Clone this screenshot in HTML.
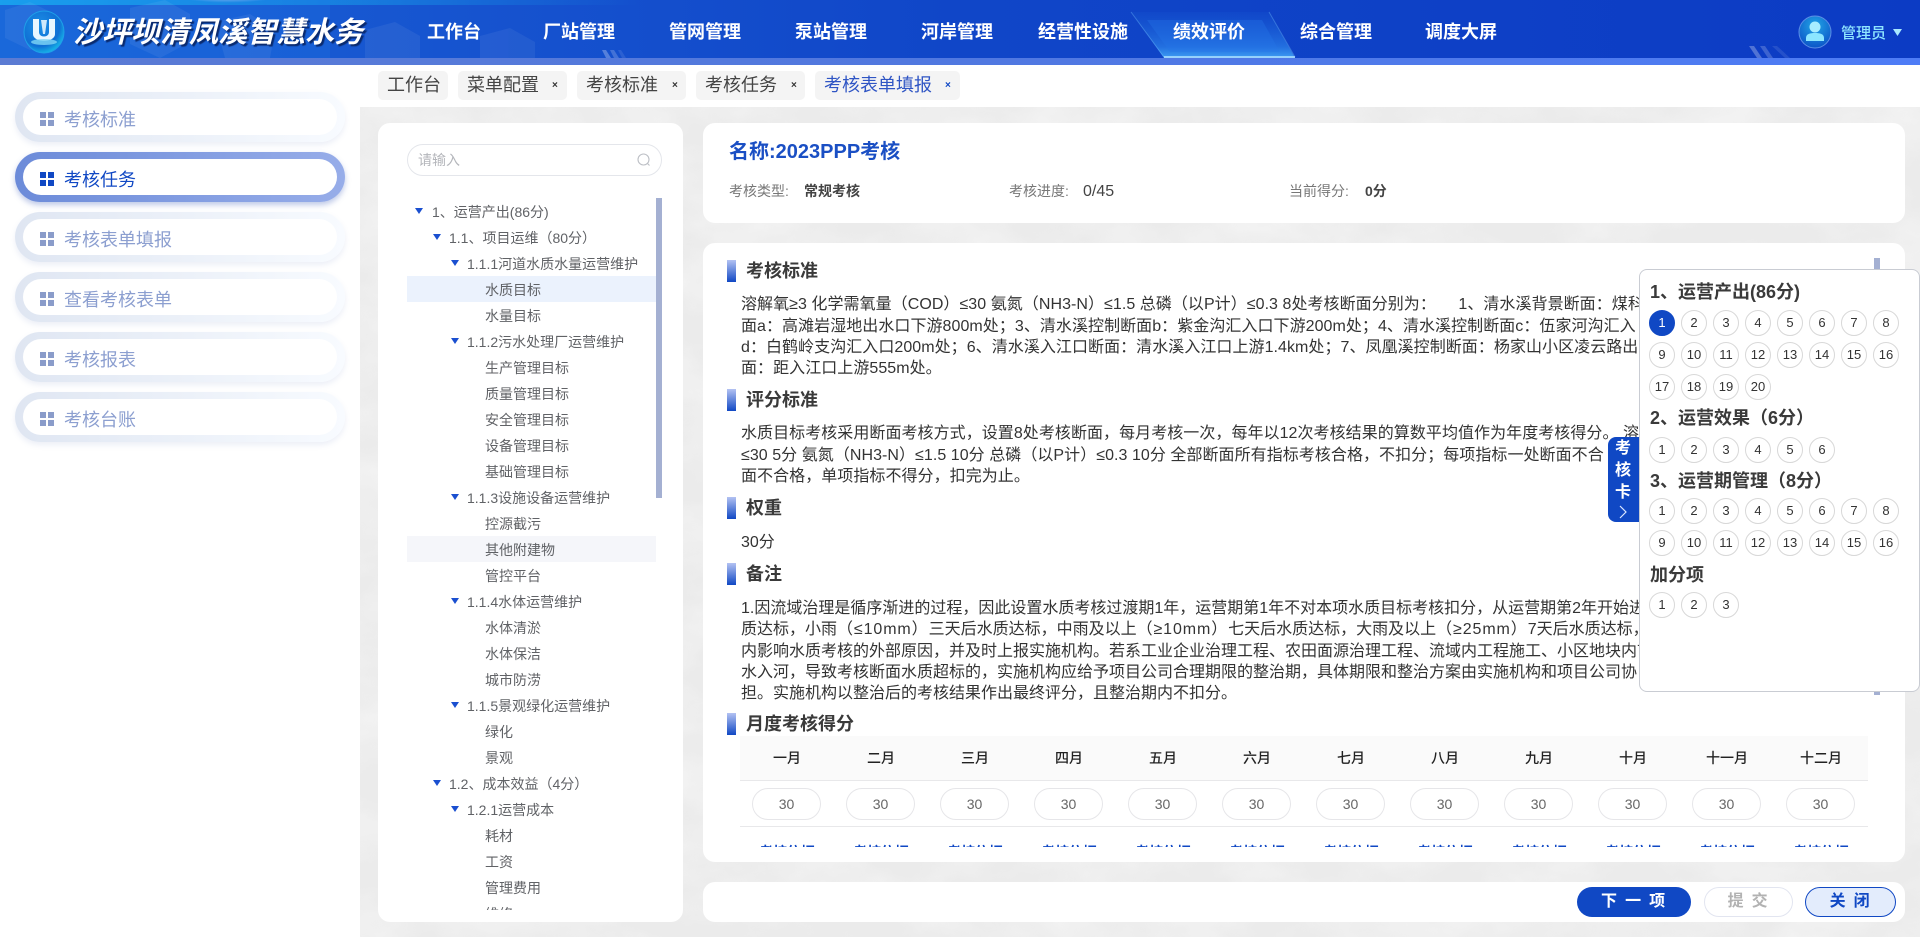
<!DOCTYPE html>
<html lang="zh-CN">
<head>
<meta charset="utf-8">
<title>沙坪坝清凤溪智慧水务</title>
<style>
*{box-sizing:border-box;margin:0;padding:0}
html,body{width:1920px;height:937px;overflow:hidden;background:#fff}
body{position:relative;font-family:"Liberation Sans","Noto Sans CJK SC",sans-serif;color:#333}
.a,.t{position:absolute}
.t{white-space:nowrap}
.hd{left:0;top:0;width:1920px;height:58px;background:linear-gradient(90deg,#1a63d6 0,#1653cf 25%,#1046c8 50%,#0c3bc4 100%);overflow:hidden}
.strip{left:0;top:58px;width:1920px;height:7px;background:linear-gradient(90deg,#5b7bd3,#5078e0 50%,#4e7cf6)}
.nav{top:19px;height:26px;line-height:26px;font-size:18px;font-weight:700;color:#fff}
.logo{left:73px;top:9px;height:48px;line-height:48px;font-size:29px;font-weight:700;font-style:italic;color:#fff;text-shadow:2px 2px 1px #0a2a6e}
.tab{top:71px;height:29px;background:#f4f4f4;border-radius:5px;line-height:29px;font-size:18px;color:#444;padding-left:9px}
.tab i{position:absolute;top:0;font-style:normal;font-size:10px;font-weight:700;color:#333}
.bg{left:360px;top:107px;width:1560px;height:830px;background:#eeeeee;overflow:hidden}
.side{left:15px;width:330px;height:50px;border-radius:25px;background:linear-gradient(90deg,#dfe6f2,#f8fbff);box-shadow:0 3px 6px rgba(120,140,200,.14)}
.side b{position:absolute;left:8px;top:7px;width:314px;height:36px;background:#fff;border-radius:18px}
.side u{position:absolute;left:25px;top:20px;width:6px;height:6px;background:#8a9cca;box-shadow:8px 0 #8a9cca,0 8px #8a9cca,8px 8px #8a9cca}
.side span{position:absolute;left:49px;top:14px;line-height:28px;font-size:18px;color:#8c9fd0;white-space:nowrap}
.side.on{background:linear-gradient(90deg,#6c8bd9,#97ade9);box-shadow:0 3px 6px rgba(70,100,190,.35)}
.side.on u{background:#1048c4;box-shadow:8px 0 #1048c4,0 8px #1048c4,8px 8px #1048c4}
.side.on span{color:#1048c4}
.card{background:#fff;border-radius:12px}
.tree{left:407px;top:198px;width:249px;height:712px;overflow:hidden}
.r{position:relative;height:26px;line-height:28px;font-size:14px;color:#606266;white-space:nowrap}
.r s{position:absolute;top:10px;width:0;height:0;border-left:4.5px solid transparent;border-right:4.5px solid transparent;border-top:6px solid #1a4fd0;text-decoration:none}
.l1{padding-left:25px}.l1 s{left:8px}
.l2{padding-left:42px}.l2 s{left:26px}
.l3{padding-left:60px}.l3 s{left:44px}
.l4{padding-left:78px}
.h{left:727px;width:9px;height:22px;background:linear-gradient(180deg,#b3c2f2,#1048c4)}
.ht{left:746px;height:26px;line-height:26px;font-size:18px;font-weight:700;color:#3a3a3a}
.p{left:741px;height:21px;line-height:21px;font-size:16px;color:#333}
.q{letter-spacing:.05px}
.w{letter-spacing:.9px}
.m{top:181px;height:20px;line-height:20px;font-size:14px;color:#777}
.mv{top:181px;height:20px;line-height:20px;font-size:14px;color:#444;font-weight:700}
.th{top:736px;width:94px;height:45px;line-height:45px;text-align:center;font-size:14px;font-weight:500;color:#222}
.ip{top:788px;width:69px;height:32px;line-height:30px;border:1px solid #e6e6e9;border-radius:16px;text-align:center;font-size:14px;color:#666;background:#fff}
.lk{top:15px;width:94px;height:20px;line-height:20px;text-align:center;font-size:14px;font-weight:700;color:#1048c4}
.pop{left:1639px;top:269px;width:281px;height:423px;background:#fff;border:1px solid #c9ccd3;border-radius:8px}
.pt{left:1650px;height:26px;line-height:26px;font-size:18px;font-weight:700;color:#3a3a3a}
.c{width:26px;height:26px;line-height:24px;border:1px solid #d8d8d8;border-radius:50%;text-align:center;font-size:13px;color:#333;background:#fff}
.btn{top:887px;height:30px;line-height:30px;border-radius:15px;text-align:center;font-size:16px;font-weight:700;white-space:nowrap;letter-spacing:1.8px}
</style>
</head>
<body>

<div class="a hd">
<svg class="a" style="left:0;top:0" width="1920" height="58" viewBox="0 0 1920 58">
<defs>
<linearGradient id="ag" x1="0" y1="0" x2="0" y2="1"><stop offset="0" stop-color="#1f6fe0" stop-opacity=".1"/><stop offset=".75" stop-color="#2f8cf0" stop-opacity=".6"/><stop offset="1" stop-color="#45a8f8" stop-opacity=".9"/></linearGradient>
<linearGradient id="tg" x1="0" y1="0" x2="1" y2="0"><stop offset="0" stop-color="#18b4f2" stop-opacity=".9"/><stop offset="1" stop-color="#18b4f2" stop-opacity="0"/></linearGradient>
<radialGradient id="gl" cx=".5" cy="0" r=".7"><stop offset="0" stop-color="#d9cff5"/><stop offset="1" stop-color="#d9cff5" stop-opacity="0"/></radialGradient>
</defs>
<rect x="0" y="0" width="640" height="5" fill="url(#tg)"/>
<rect x="0" y="0" width="330" height="58" fill="#1d78e6" opacity=".25"/>
<ellipse cx="228" cy="0" rx="40" ry="7" fill="url(#gl)"/>
<g fill="#fff" opacity=".06">
<polygon points="5,10 30,2 55,14 55,40 30,50 5,38"/>
<polygon points="130,8 165,0 190,14 190,42 160,58 130,44"/>
<polygon points="215,22 250,14 275,30 270,58 225,58"/>
<polygon points="365,30 395,22 420,36 420,58 365,58"/>
<polygon points="480,36 510,28 535,42 535,58 480,58"/>
</g>
<polygon points="1131,12 1269,12 1295,58 1164,58" fill="url(#ag)"/>
<polygon points="1147,20 1262,20 1280,52 1170,52" fill="#2576e8" opacity=".35"/>
<path d="M1131 12 L1164 57" stroke="#7cc8ff" stroke-width="1" fill="none" opacity=".35"/>
<path d="M1269 12 L1295 57" stroke="#7cc8ff" stroke-width="1" fill="none" opacity=".35"/>
<rect x="1164" y="56" width="131" height="2" fill="#b5e4ff" opacity=".75"/>
<g fill="#fff">
<polygon points="602,50 606,50 611,58 606,58" opacity=".28"/>
<polygon points="610,50 614,50 619,58 614,58" opacity=".2"/>
<polygon points="618,50 621,50 626,58 622,58" opacity=".1"/>
<polygon points="1749,46 1754,46 1762,58 1757,58" opacity=".28"/>
<polygon points="1760,46 1765,46 1773,58 1768,58" opacity=".2"/>
<polygon points="1772,46 1777,46 1790,58 1785,58" opacity=".1"/>
</g>
<defs><radialGradient id="lg" cx=".4" cy=".35" r=".7"><stop offset="0" stop-color="#1c8fe6"/><stop offset=".7" stop-color="#0f6fd4"/><stop offset="1" stop-color="#17c0ea"/></radialGradient></defs>
<ellipse cx="44" cy="32" rx="20" ry="21" fill="url(#lg)" stroke="#1f9fe8" stroke-width="1"/>
<path d="M33 19 V34 C33 43 55 43 55 34 V19 H49 V32 C49 38 39 38 39 32 V19 Z" fill="#e8f6ff"/>
<path d="M41 20 L43 34 H45 L47 20" fill="#cfe9fb"/>
<ellipse cx="44" cy="42" rx="13" ry="3" fill="#7fd6f5" opacity=".8"/>
<defs><radialGradient id="av" cx=".5" cy=".3" r=".7"><stop offset="0" stop-color="#22a6e6"/><stop offset="1" stop-color="#0c55c8"/></radialGradient></defs>
<ellipse cx="1815" cy="32" rx="16" ry="16" fill="url(#av)" stroke="#5c8fe6" stroke-width="1"/>
<circle cx="1815" cy="27" r="5.5" fill="#a8edff"/>
<path d="M1806 41 V38 C1806 34 1810 33 1815 33 C1820 33 1824 34 1824 38 V41 Z" fill="#8ce6ff"/>
<polygon points="1893,29 1902,29 1897.5,36" fill="#a9e8ff"/>
</svg>
<div class="t logo">沙坪坝清凤溪智慧水务</div>
<div class="t nav" style="left:427px">工作台</div>
<div class="t nav" style="left:543px">厂站管理</div>
<div class="t nav" style="left:669px">管网管理</div>
<div class="t nav" style="left:795px">泵站管理</div>
<div class="t nav" style="left:921px">河岸管理</div>
<div class="t nav" style="left:1038px">经营性设施</div>
<div class="t nav" style="left:1173px">绩效评价</div>
<div class="t nav" style="left:1300px">综合管理</div>
<div class="t nav" style="left:1425px">调度大屏</div>
<div class="t" style="left:1841px;top:22px;line-height:24px;font-size:15px;font-weight:500;color:#8fe6ff">管理员</div>
</div>
<div class="a strip"></div>

<div class="a tab" style="left:378px;width:70px">工作台</div>
<div class="a tab" style="left:458px;width:109px">菜单配置<i style="left:94px">×</i></div>
<div class="a tab" style="left:577px;width:109px">考核标准<i style="left:95px">×</i></div>
<div class="a tab" style="left:696px;width:109px">考核任务<i style="left:95px">×</i></div>
<div class="a tab" style="left:815px;width:145px;color:#2f55c4">考核表单填报<i style="left:130px;color:#1048c4">×</i></div>

<div class="a side" style="top:92px"><b></b><u></u><span>考核标准</span></div>
<div class="a side on" style="top:152px"><b></b><u></u><span>考核任务</span></div>
<div class="a side" style="top:212px"><b></b><u></u><span>考核表单填报</span></div>
<div class="a side" style="top:272px"><b></b><u></u><span>查看考核表单</span></div>
<div class="a side" style="top:332px"><b></b><u></u><span>考核报表</span></div>
<div class="a side" style="top:392px"><b></b><u></u><span>考核台账</span></div>

<div class="a bg">
<svg width="1560" height="830" style="position:absolute;left:0;top:0">
<filter id="n" x="0" y="0" width="100%" height="100%"><feTurbulence type="fractalNoise" baseFrequency=".012 .02" numOctaves="4" seed="7"/><feColorMatrix values="0 0 0 0 1  0 0 0 0 1  0 0 0 0 1  1.3 0 0 0 -.45"/></filter>
<rect width="1560" height="830" fill="#ebebeb"/>
<rect width="1560" height="830" filter="url(#n)" opacity=".6"/>
</svg>
</div>

<div class="a card" style="left:378px;top:123px;width:305px;height:799px"></div>
<div class="a" style="left:407px;top:144px;width:255px;height:32px;border:1px solid #e4e6eb;border-radius:16px;background:#fff"></div>
<div class="t" style="left:418px;top:150px;line-height:20px;font-size:14px;color:#b4b6bb">请输入</div>
<svg class="a" style="left:636px;top:152px" width="16" height="16" viewBox="0 0 16 16"><circle cx="7.5" cy="7.5" r="5.5" fill="none" stroke="#bcbfc5" stroke-width="1.1"/><path d="M11.5 11.5 L13.5 13.5" stroke="#bcbfc5" stroke-width="1.1"/></svg>
<div class="a" style="left:407px;top:276px;width:249px;height:26px;background:#ebf2fd"></div>
<div class="a" style="left:407px;top:536px;width:249px;height:26px;background:#f5f6fa"></div>
<div class="a" style="left:656px;top:198px;width:6px;height:300px;background:#a4b0d2"></div>
<div class="a tree">
<div class="r l1"><s></s>1、运营产出(86分)</div>
<div class="r l2"><s></s>1.1、项目运维&#65288;80分&#65289;</div>
<div class="r l3"><s></s>1.1.1河道水质水量运营维护</div>
<div class="r l4">水质目标</div>
<div class="r l4">水量目标</div>
<div class="r l3"><s></s>1.1.2污水处理厂运营维护</div>
<div class="r l4">生产管理目标</div>
<div class="r l4">质量管理目标</div>
<div class="r l4">安全管理目标</div>
<div class="r l4">设备管理目标</div>
<div class="r l4">基础管理目标</div>
<div class="r l3"><s></s>1.1.3设施设备运营维护</div>
<div class="r l4">控源截污</div>
<div class="r l4">其他附建物</div>
<div class="r l4">管控平台</div>
<div class="r l3"><s></s>1.1.4水体运营维护</div>
<div class="r l4">水体清淤</div>
<div class="r l4">水体保洁</div>
<div class="r l4">城市防涝</div>
<div class="r l3"><s></s>1.1.5景观绿化运营维护</div>
<div class="r l4">绿化</div>
<div class="r l4">景观</div>
<div class="r l2"><s></s>1.2、成本效益&#65288;4分&#65289;</div>
<div class="r l3"><s></s>1.2.1运营成本</div>
<div class="r l4">耗材</div>
<div class="r l4">工资</div>
<div class="r l4">管理费用</div>
<div class="r l4">维修</div>
</div>

<div class="a card" style="left:703px;top:123px;width:1202px;height:100px"></div>
<div class="t" style="left:729px;top:138px;line-height:28px;font-size:20px;font-weight:700;color:#1a4fc4">名称:2023PPP考核</div>
<div class="t m" style="left:729px">考核类型:</div><div class="t mv" style="left:804px">常规考核</div>
<div class="t m" style="left:1009px">考核进度:</div><div class="t mv" style="left:1083px;top:182px;font-size:16px;font-weight:400">0/45</div>
<div class="t m" style="left:1289px">当前得分:</div><div class="t mv" style="left:1365px">0分</div>

<div class="a card" style="left:703px;top:243px;width:1202px;height:619px"></div>

<div class="a h" style="top:260px"></div><div class="t ht" style="top:258px">考核标准</div>
<div class="t p q" style="top:294px">溶解氧≥3 化学需氧量&#65288;COD&#65289;≤30 氨氮&#65288;NH3-N&#65289;≤1.5 总磷&#65288;以P计&#65289;≤0.3 8处考核断面分别为&#65306;&nbsp;&nbsp;&nbsp;&nbsp; 1、清水溪背景断面&#65306;煤科</div>
<div class="t p q" style="top:316px">面a&#65306;高滩岩湿地出水口下游800m处&#65307;3、清水溪控制断面b&#65306;紫金沟汇入口下游200m处&#65307;4、清水溪控制断面c&#65306;伍家河沟汇入</div>
<div class="t p q" style="top:337px">d&#65306;白鹤岭支沟汇入口200m处&#65307;6、清水溪入江口断面&#65306;清水溪入江口上游1.4km处&#65307;7、凤凰溪控制断面&#65306;杨家山小区凌云路出</div>
<div class="t p q" style="top:358px">面&#65306;距入江口上游555m处。</div>

<div class="a h" style="top:389px"></div><div class="t ht" style="top:387px">评分标准</div>
<div class="t p q" style="top:423px">水质目标考核采用断面考核方式&#65292;设置8处考核断面&#65292;每月考核一次&#65292;每年以12次考核结果的算数平均值作为年度考核得分。 溶</div>
<div class="t p q" style="top:445px">≤30 5分 氨氮&#65288;NH3-N&#65289;≤1.5 10分 总磷&#65288;以P计&#65289;≤0.3 10分 全部断面所有指标考核合格&#65292;不扣分&#65307;每项指标一处断面不合</div>
<div class="t p q" style="top:466px">面不合格&#65292;单项指标不得分&#65292;扣完为止。</div>

<div class="a h" style="top:497px"></div><div class="t ht" style="top:495px">权重</div>
<div class="t p" style="top:532px">30分</div>

<div class="a h" style="top:563px"></div><div class="t ht" style="top:561px">备注</div>
<div class="t p" style="top:598px">1.因流域治理是循序渐进的过程&#65292;因此设置水质考核过渡期1年&#65292;运营期第1年不对本项水质目标考核扣分&#65292;从运营期第2年开始进</div>
<div class="t p" style="top:619px">质达标&#65292;小雨<span class="w">&#65288;≤10mm&#65289;</span>三天后水质达标&#65292;中雨及以上<span class="w">&#65288;≥10mm&#65289;</span>七天后水质达标&#65292;大雨及以上<span class="w">&#65288;≥25mm&#65289;</span>7天后水质达标&#65292;</div>
<div class="t p" style="top:641px">内影响水质考核的外部原因&#65292;并及时上报实施机构。若系工业企业治理工程、农田面源治理工程、流域内工程施工、小区地块内市</div>
<div class="t p" style="top:662px">水入河&#65292;导致考核断面水质超标的&#65292;实施机构应给予项目公司合理期限的整治期&#65292;具体期限和整治方案由实施机构和项目公司协</div>
<div class="t p" style="top:683px">担。实施机构以整治后的考核结果作出最终评分&#65292;且整治期内不扣分。</div>

<div class="a h" style="top:713px"></div><div class="t ht" style="top:711px">月度考核得分</div>

<div class="a" style="left:740px;top:736px;width:1128px;height:45px;background:#fafafa;border-bottom:1px solid #e8e8ea"></div>
<div class="a" style="left:740px;top:826px;width:1128px;height:1px;background:#e8e8ea"></div>
<div class="t th" style="left:740px">一月</div><div class="t th" style="left:834px">二月</div><div class="t th" style="left:928px">三月</div><div class="t th" style="left:1022px">四月</div><div class="t th" style="left:1116px">五月</div><div class="t th" style="left:1210px">六月</div><div class="t th" style="left:1304px">七月</div><div class="t th" style="left:1398px">八月</div><div class="t th" style="left:1492px">九月</div><div class="t th" style="left:1586px">十月</div><div class="t th" style="left:1680px">十一月</div><div class="t th" style="left:1774px">十二月</div>
<div class="a ip" style="left:752px">30</div><div class="a ip" style="left:846px">30</div><div class="a ip" style="left:940px">30</div><div class="a ip" style="left:1034px">30</div><div class="a ip" style="left:1128px">30</div><div class="a ip" style="left:1222px">30</div><div class="a ip" style="left:1316px">30</div><div class="a ip" style="left:1410px">30</div><div class="a ip" style="left:1504px">30</div><div class="a ip" style="left:1598px">30</div><div class="a ip" style="left:1692px">30</div><div class="a ip" style="left:1786px">30</div>
<div class="a" style="left:740px;top:827px;width:1128px;height:20px;overflow:hidden">
<div class="t lk" style="left:0">考核依据</div><div class="t lk" style="left:94px">考核依据</div><div class="t lk" style="left:188px">考核依据</div><div class="t lk" style="left:282px">考核依据</div><div class="t lk" style="left:376px">考核依据</div><div class="t lk" style="left:470px">考核依据</div><div class="t lk" style="left:564px">考核依据</div><div class="t lk" style="left:658px">考核依据</div><div class="t lk" style="left:752px">考核依据</div><div class="t lk" style="left:846px">考核依据</div><div class="t lk" style="left:940px">考核依据</div><div class="t lk" style="left:1034px">考核依据</div>
</div>

<div class="a" style="left:1874px;top:258px;width:6px;height:437px;background:#a4b0d2"></div>

<div class="a pop"></div>
<div class="a" style="left:1608px;top:437px;width:31px;height:85px;background:#1048c4;border-radius:8px 0 0 8px"></div>
<div class="t" style="left:1615px;top:438px;width:16px;line-height:22px;font-size:16px;font-weight:700;color:#fff;white-space:normal">考核卡</div>
<svg class="a" style="left:1617px;top:504px" width="12" height="16" viewBox="0 0 12 16"><path d="M3 2 L9 8 L3 14" fill="none" stroke="#dbe6ff" stroke-width="1.2"/></svg>

<div class="t pt" style="top:279px">1、运营产出(86分)</div>
<div class="a c" style="left:1649px;top:310px;background:#1048c4;border-color:#1048c4;color:#fff">1</div>
<div class="a c" style="left:1681px;top:310px">2</div><div class="a c" style="left:1713px;top:310px">3</div><div class="a c" style="left:1745px;top:310px">4</div><div class="a c" style="left:1777px;top:310px">5</div><div class="a c" style="left:1809px;top:310px">6</div><div class="a c" style="left:1841px;top:310px">7</div><div class="a c" style="left:1873px;top:310px">8</div>
<div class="a c" style="left:1649px;top:342px">9</div><div class="a c" style="left:1681px;top:342px">10</div><div class="a c" style="left:1713px;top:342px">11</div><div class="a c" style="left:1745px;top:342px">12</div><div class="a c" style="left:1777px;top:342px">13</div><div class="a c" style="left:1809px;top:342px">14</div><div class="a c" style="left:1841px;top:342px">15</div><div class="a c" style="left:1873px;top:342px">16</div>
<div class="a c" style="left:1649px;top:374px">17</div><div class="a c" style="left:1681px;top:374px">18</div><div class="a c" style="left:1713px;top:374px">19</div><div class="a c" style="left:1745px;top:374px">20</div>

<div class="t pt" style="top:405px">2、运营效果&#65288;6分&#65289;</div>
<div class="a c" style="left:1649px;top:437px">1</div><div class="a c" style="left:1681px;top:437px">2</div><div class="a c" style="left:1713px;top:437px">3</div><div class="a c" style="left:1745px;top:437px">4</div><div class="a c" style="left:1777px;top:437px">5</div><div class="a c" style="left:1809px;top:437px">6</div>

<div class="t pt" style="top:468px">3、运营期管理&#65288;8分&#65289;</div>
<div class="a c" style="left:1649px;top:498px">1</div><div class="a c" style="left:1681px;top:498px">2</div><div class="a c" style="left:1713px;top:498px">3</div><div class="a c" style="left:1745px;top:498px">4</div><div class="a c" style="left:1777px;top:498px">5</div><div class="a c" style="left:1809px;top:498px">6</div><div class="a c" style="left:1841px;top:498px">7</div><div class="a c" style="left:1873px;top:498px">8</div>
<div class="a c" style="left:1649px;top:530px">9</div><div class="a c" style="left:1681px;top:530px">10</div><div class="a c" style="left:1713px;top:530px">11</div><div class="a c" style="left:1745px;top:530px">12</div><div class="a c" style="left:1777px;top:530px">13</div><div class="a c" style="left:1809px;top:530px">14</div><div class="a c" style="left:1841px;top:530px">15</div><div class="a c" style="left:1873px;top:530px">16</div>

<div class="t pt" style="top:562px">加分项</div>
<div class="a c" style="left:1649px;top:592px">1</div><div class="a c" style="left:1681px;top:592px">2</div><div class="a c" style="left:1713px;top:592px">3</div>

<div class="a card" style="left:703px;top:882px;width:1202px;height:40px"></div>
<div class="a btn" style="left:1577px;width:114px;background:#1048c4;color:#fff">下 一 项</div>
<div class="a btn" style="left:1704px;width:89px;background:#fff;border:1px solid #e2e5f0;line-height:28px;color:#b2b2b2">提 交</div>
<div class="a btn" style="left:1805px;width:91px;background:#e3ecfc;border:1px solid #1048c4;line-height:28px;color:#1048c4">关 闭</div>

</body>
</html>
